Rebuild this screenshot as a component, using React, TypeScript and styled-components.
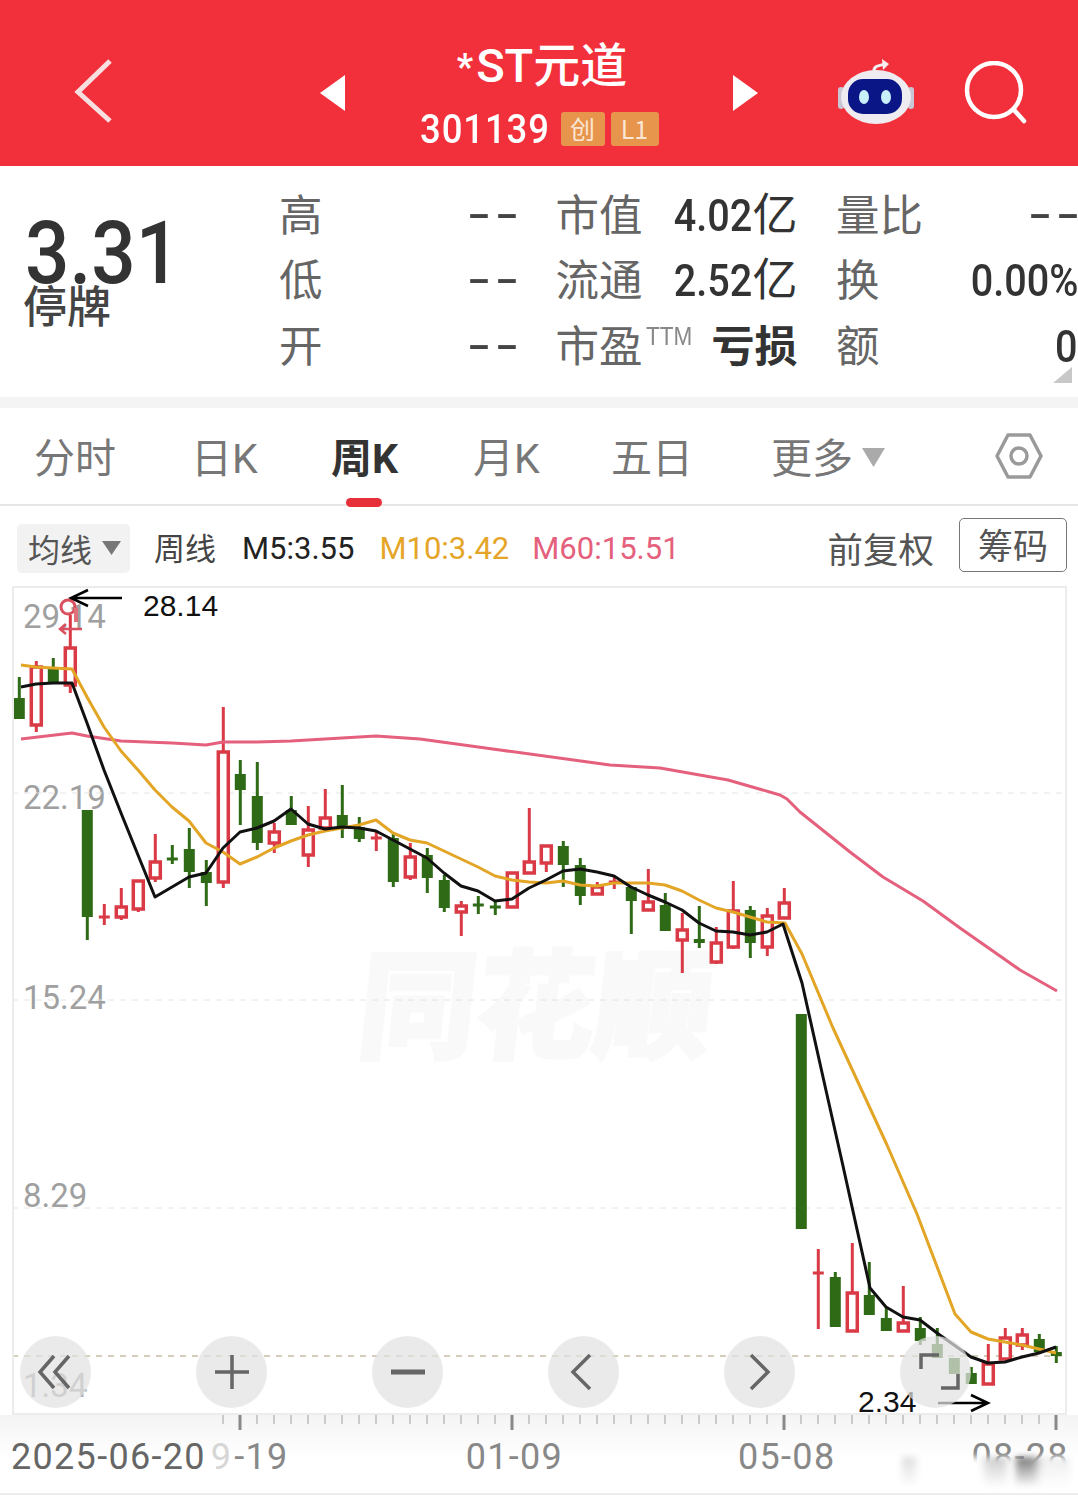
import React from "react";
import styled, { createGlobalStyle } from "styled-components";

const CJK = `"Noto Sans CJK SC", "Noto Sans", sans-serif`;
const ROBOTO = `"Roboto", ${CJK}`;

const Global = createGlobalStyle`
  html, body { margin: 0; padding: 0; background: #fff; }
  body { width: 1078px; height: 1500px; overflow: hidden; font-family: ${CJK}; }
  * { box-sizing: border-box; }
`;

const Page = styled.div`
  position: relative;
  width: 1078px;
  height: 1500px;
  display: flex;
  flex-direction: column;
  background: #fff;
  overflow: hidden;
`;

/* ---------- header ---------- */
const Header = styled.header`
  height: 166px;
  flex: none;
  background: #f2303b;
  display: flex;
  align-items: center;
  padding: 20px 0 0 72px;
  color: #fff;
`;
const IconSlot = styled.div<{ $w: number; $ml: number; $mt?: number }>`
  width: ${(p) => p.$w}px;
  margin-left: ${(p) => p.$ml}px;
  margin-top: ${(p) => p.$mt ?? 0}px;
  flex: none;
  display: flex;
  justify-content: center;
`;
const TitleBlock = styled.div`
  width: 382px;
  flex: none;
  display: flex;
  flex-direction: column;
  align-items: center;
  margin-top: -3px;
`;
const Title = styled.div`
  font-family: ${ROBOTO};
  font-size: 47px;
  line-height: 56px;
  font-weight: 500;
  white-space: nowrap;
  display: flex;
  align-items: center;
  margin-left: 6px;
`;
const TitleStar = styled.span`
  font-size: 36px;
  margin-right: 3px;
  margin-top: 2px;
  font-weight: 700;
`;
const CodeRow = styled.div`
  display: flex;
  align-items: center;
  gap: 6px;
  margin-top: 16px;
`;
const Code = styled.span`
  display: inline-block;
  font-family: ${ROBOTO};
  font-size: 41px;
  line-height: 36px;
  font-weight: 500;
  margin-right: 6px;
  width: 129px;
  letter-spacing: 1px;
  white-space: nowrap;
  transform: scaleX(0.89);
  transform-origin: left center;
`;
const Badge = styled.span<{ $w: number }>`
  width: ${(p) => p.$w}px;
  height: 34px;
  background: #e7944d;
  color: #fbe6d4;
  border-radius: 3px;
  font-size: 25px;
  line-height: 32px;
  text-align: center;
`;

/* ---------- quote ---------- */
const Quote = styled.section`
  position: relative;
  height: 231px;
  flex: none;
  display: flex;
  padding-top: 17px;
`;
const PriceColumn = styled.div`
  width: 279px;
  flex: none;
  padding: 37px 0 0 23px;
`;
const Price = styled.div`
  font-family: ${ROBOTO};
  font-size: 88px;
  line-height: 66px;
  font-weight: 500;
  color: #333;
  margin-left: 2px;
  white-space: nowrap;
  transform: scaleX(0.89);
  transform-origin: left center;
`;
const Halt = styled.div`
  font-size: 44px;
  line-height: 46px;
  font-weight: 500;
  color: #444;
  margin-top: -5px;
`;
const StatGrid = styled.div`
  display: grid;
  grid-template-columns: 238px 242px 242px;
  grid-auto-rows: 65.5px;
  column-gap: 38.5px;
  height: 197px;
`;
const StatCell = styled.div`
  display: flex;
  justify-content: space-between;
  align-items: center;
  white-space: nowrap;
`;
const StatLabel = styled.span`
  font-size: 43.5px;
  line-height: 50px;
  color: #666;
  display: flex;
  align-items: flex-start;
  margin-top: -6px;
`;
const Ttm = styled.span`
  font-family: "Liberation Sans", sans-serif;
  font-size: 25px;
  line-height: 34px;
  margin-left: 3px;
  color: #888;
  transform: scaleX(0.9);
  transform-origin: left center;
`;
const StatValue = styled.span<{ $cjk?: boolean }>`
  font-family: ${ROBOTO};
  font-size: ${(p) => (p.$cjk ? 43 : 45)}px;
  font-weight: ${(p) => (p.$cjk ? 700 : 400)};
  line-height: 50px;
  color: #333;
  display: flex;
`;
const Num = styled.span`
  display: inline-block;
  font-weight: 500;
  margin-left: -10px;
  transform: scaleX(0.88);
  transform-origin: right center;
`;
const Dash = styled.span`
  font-family: "Liberation Sans", sans-serif;
  font-size: 72px;
  line-height: 50px;
  letter-spacing: 4px;
  margin-right: -6px;
  margin-top: -10px;
  color: #444;
  transform: scaleY(0.7);
`;
const CornerMark = styled.div`
  position: absolute;
  right: 6px;
  bottom: 14px;
  width: 19px;
  height: 16px;
  background: #c8c8c8;
  clip-path: polygon(100% 0, 100% 100%, 0 100%);
`;
const Band = styled.div`
  height: 11px;
  flex: none;
  background: #f4f4f4;
`;

/* ---------- tabs ---------- */
const Tabs = styled.nav`
  position: relative;
  height: 98px;
  flex: none;
  border-bottom: 2px solid #e6e6e6;
  display: flex;
  align-items: center;
  padding: 0 34px 0 34px;
`;
const Tab = styled.div<{ $active?: boolean; $w: number }>`
  position: relative;
  width: ${(p) => p.$w}px;
  flex: none;
  font-size: 41px;
  line-height: 104px;
  height: 98px;
  white-space: nowrap;
  color: ${(p) => (p.$active ? "#333" : "#777")};
  font-weight: ${(p) => (p.$active ? 700 : 400)};
  font-family: ${ROBOTO};
`;
const TabMark = styled.span`
  position: absolute;
  left: 15px;
  bottom: -2px;
  width: 36px;
  height: 9px;
  border-radius: 5px;
  background: #e8303a;
`;
const MoreCaret = styled.span`
  display: inline-block;
  width: 23px;
  height: 19px;
  margin-left: 9px;
  background: #aaa;
  clip-path: polygon(0 0, 100% 0, 50% 100%);
  transform: translateY(-6px);
`;
const SettingsSlot = styled.div`
  margin-left: auto;
  display: flex;
`;

/* ---------- toolbar ---------- */
const Toolbar = styled.div`
  height: 80px;
  flex: none;
  display: flex;
  align-items: center;
  padding: 0 11px 0 17px;
  white-space: nowrap;
`;
const MaChip = styled.div`
  width: 113px;
  height: 49px;
  margin-top: 4px;
  background: #f2f2f2;
  border-radius: 5px;
  display: flex;
  align-items: center;
  padding-left: 11px;
  font-size: 32px;
  color: #555;
`;
const ChipCaret = styled.span`
  width: 19px;
  height: 14px;
  margin-left: 10px;
  background: #777;
  clip-path: polygon(0 0, 100% 0, 50% 100%);
`;
const ToolText = styled.span<{ $color: string; $ml: number; $mt?: number }>`
  font-family: ${ROBOTO};
  font-size: 31px;
  margin-left: ${(p) => p.$ml}px;
  margin-top: ${(p) => p.$mt ?? 4}px;
  color: ${(p) => p.$color};
`;
const AdjustLabel = styled.span`
  margin-left: auto;
  font-size: 35.5px;
  margin-top: 2px;
  color: #555;
`;
const ChipButton = styled.div`
  width: 108px;
  height: 54px;
  margin-left: 25px;
  margin-top: -3px;
  border: 1px solid #777;
  border-radius: 5px;
  font-size: 35px;
  line-height: 50px;
  text-align: center;
  color: #555;
`;

/* ---------- chart ---------- */
const ChartFrame = styled.div`
  position: relative;
  flex: none;
  width: 1055px;
  height: 829px;
  margin-left: 12px;
  border: 2px solid #ececec;
  overflow: hidden;
`;
const ChartSvg = styled.svg`
  position: relative;
  z-index: 1;
  display: block;
`;
const Watermark = styled.div`
  position: absolute;
  left: 346px;
  top: 345px;
  font-size: 118px;
  line-height: 130px;
  font-weight: 900;
  color: #f9f9f9;
  -webkit-text-stroke: 3px #f9f9f9;
  white-space: nowrap;
  transform: skewX(-6deg);
`;
const PriceLabel = styled.span<{ $top: number }>`
  position: absolute;
  left: 9px;
  top: ${(p) => p.$top}px;
  font-family: ${ROBOTO};
  font-size: 33px;
  line-height: 40px;
  color: #a0a0a0;
`;
const Extreme = styled.span<{ $left: number; $top: number }>`
  position: absolute;
  z-index: 2;
  left: ${(p) => p.$left}px;
  top: ${(p) => p.$top}px;
  font-family: "Liberation Sans", sans-serif;
  font-size: 30px;
  line-height: 34px;
  color: #111;
`;
const FloatingControls = styled.div`
  position: absolute;
  z-index: 3;
  left: 6px;
  top: 748px;
  display: flex;
  gap: 105px;
`;
const RoundButton = styled.div`
  width: 71px;
  height: 72px;
  border-radius: 50%;
  background: rgba(226, 226, 226, 0.72);
  display: flex;
  align-items: center;
  justify-content: center;
`;

/* ---------- axis ---------- */
const Axis = styled.div`
  position: relative;
  flex: none;
  height: 80px;
  border-bottom: 2px solid #ececec;
  background: linear-gradient(180deg, #f4f4f4 0, #fff 55%);
`;
const TickSvg = styled.svg`
  display: block;
`;
const AxisLabels = styled.div`
  height: 50px;
  font-family: ${ROBOTO};
  font-size: 36px;
  line-height: 50px;
  letter-spacing: 1.3px;
  display: flex;
  padding-left: 11px;
  white-space: nowrap;
`;
const AxisLabel = styled.span<{ $ml: number; $dark?: boolean }>`
  margin-left: ${(p) => p.$ml}px;
  color: ${(p) => (p.$dark ? "#666" : "#888")};
`;
const FadedDigit = styled.span`
  color: #d6d6d6;
  margin-left: 5px;
`;
const CornerSmudge = styled.div`
  position: absolute;
  z-index: 4;
  left: 895px;
  top: 1457px;
  width: 175px;
  height: 32px;
  filter: blur(3px);
  background:
    linear-gradient(180deg, rgba(255, 255, 255, 0) 0, #fff 95%),
    linear-gradient(
      90deg,
      #fff 0 3%,
      #ddd 5% 10%,
      #fff 14% 48%,
      #ccc 54% 62%,
      #fff 66% 68%,
      #777 70% 78%,
      #eee 84% 100%
    );
`;

/* ---------- data ---------- */
type C = [boolean, number, number, number, number];
const R = true;
const G = false;
const candles: C[] = [
  [G, 677, 698, 719, 719], [R, 661, 667, 725, 732], [G, 658, 668, 683, 683], [R, 615, 648, 685, 693],
  [G, 810, 810, 917, 940], [R, 904, 917, 917, 925], [R, 888, 907, 917, 920], [R, 881, 881, 909, 912],
  [R, 834, 862, 878, 882], [G, 845, 859, 859, 864], [G, 828, 849, 872, 888], [G, 860, 872, 883, 906],
  [R, 707, 752, 882, 888], [G, 760, 774, 790, 825], [G, 762, 796, 843, 850], [R, 823, 832, 843, 853],
  [G, 796, 810, 825, 825], [R, 806, 830, 855, 867], [R, 789, 818, 828, 828], [G, 785, 815, 826, 838],
  [G, 817, 827, 839, 842], [R, 832, 838, 838, 851], [G, 833, 838, 882, 887], [R, 843, 857, 877, 880],
  [G, 848, 855, 878, 893], [G, 875, 880, 908, 912], [R, 901, 906, 912, 936], [G, 896, 905, 905, 914],
  [G, 901, 907, 907, 915], [R, 873, 873, 907, 908], [R, 808, 862, 873, 873], [R, 846, 846, 863, 872],
  [G, 841, 846, 865, 887], [G, 858, 865, 896, 905], [R, 882, 887, 894, 894], [R, 877, 882, 882, 889],
  [G, 887, 887, 901, 934], [R, 869, 902, 910, 910], [G, 893, 905, 931, 931], [R, 913, 930, 940, 973],
  [G, 906, 939, 943, 948], [R, 927, 943, 962, 964], [R, 881, 911, 947, 949], [G, 906, 910, 943, 958],
  [R, 908, 916, 947, 956], [R, 888, 903, 918, 918], [G, 1014, 1014, 1229, 1229], [R, 1249, 1273, 1273, 1329],
  [G, 1272, 1277, 1327, 1327], [R, 1243, 1293, 1331, 1331], [G, 1262, 1295, 1315, 1315], [G, 1307, 1318, 1331, 1331],
  [R, 1286, 1323, 1331, 1331], [G, 1317, 1328, 1341, 1345], [G, 1328, 1344, 1358, 1358], [G, 1358, 1358, 1374, 1374],
  [G, 1367, 1373, 1384, 1384], [R, 1344, 1364, 1384, 1384], [R, 1328, 1338, 1359, 1359], [R, 1328, 1335, 1345, 1350],
  [G, 1334, 1339, 1352, 1352], [G, 1346, 1352, 1356, 1363],
];

const m5 = "21,687 36,684 53,683 72,683 87,723 104,770 121,813 155,897 172,887 189,877 206,873 223,848 240,832 257,828 274,821 291,809 308,824 325,829 342,827 359,828 376,831 393,840 410,849 427,858 444,873 461,886 478,891 495,901 512,899 529,888 546,880 563,871 580,869 597,872 614,876 631,887 648,895 665,902 682,910 699,923 716,931 733,932 750,935 767,932 783,924 802,983 823,1077 843,1166 870,1288 886,1307 903,1317 920,1320 937,1333 954,1345 971,1357 988,1363 1005,1362 1022,1357 1039,1353 1056,1347";
const m10 = "21,665 36,667 53,668 72,669 87,697 104,727 121,751 138,770 155,790 172,807 189,821 206,843 223,852 240,864 257,857 274,848 291,841 308,835 325,831 342,828 359,825 376,820 393,833 410,840 427,843 444,851 461,859 478,867 495,876 512,880 529,882 546,883 563,881 580,885 597,886 614,883 631,883 648,883 665,885 682,891 699,900 716,908 733,912 750,917 767,922 785,923 802,954 833,1028 887,1145 917,1214 955,1314 971,1332 988,1339 1005,1342 1022,1345 1039,1349 1056,1353";
const m60 = "21,739 72,733 87,736 121,741 172,743 206,745 223,742 257,742 291,741 342,738 376,736 420,739 500,750 610,765 660,768 728,780 780,795 787,799 800,812 850,852 883,877 923,901 960,928 1020,970 1057,991";

const RED = "#d93a45";
const GREEN = "#2f6a16";

const Candle = ({ c, i }: { c: C; i: number }) => {
  const x = 19.3 + i * 17;
  const [up, wt, bt, bb, wb] = c;
  const col = up ? RED : GREEN;
  return (
    <g>
      <line x1={x} x2={x} y1={wt} y2={bt} stroke={col} strokeWidth={3} />
      <line x1={x} x2={x} y1={bb} y2={wb} stroke={col} strokeWidth={3} />
      {bt === bb ? (
        <line x1={x - 5.5} x2={x + 5.5} y1={bt} y2={bt} stroke={col} strokeWidth={3} />
      ) : up ? (
        <rect x={x - 5} y={bt} width={10} height={bb - bt} fill="#fff" stroke={col} strokeWidth={3.5} />
      ) : (
        <rect x={x - 5.5} y={bt} width={11} height={bb - bt} fill={col} />
      )}
    </g>
  );
};

const Chart = () => (
  <ChartSvg width={1051} height={825} viewBox="14 588 1051 825">
    {[793, 1000, 1208].map((y) => (
      <line key={y} x1={12} x2={1066} y1={y} y2={y} stroke="#e4e4e4" strokeWidth={1} strokeDasharray="6 6" />
    ))}
    <line x1={12} x2={1066} y1={1356} y2={1356} stroke="#c6bda6" strokeWidth={1.5} strokeDasharray="6 6" />
    {candles.map((c, i) => (
      <Candle key={i} c={c} i={i} />
    ))}
    <circle cx={68} cy={607} r={7} fill="none" stroke="#d9505f" strokeWidth={3} />
    <rect x={74} y={608} width={4} height={14} fill="#e0707c" />
    <path d="M82 629H60M66 624l-6 5 6 5" fill="none" stroke="#d9505f" strokeWidth={2.5} />
    <polyline points={m60} fill="none" stroke="#e5607c" strokeWidth={3} strokeLinejoin="round" />
    <polyline points={m10} fill="none" stroke="#e3a526" strokeWidth={3} strokeLinejoin="round" />
    <polyline points={m5} fill="none" stroke="#111" strokeWidth={3} strokeLinejoin="round" />
    <path d="M122 598H71M88 590l-17 8 17 8" fill="none" stroke="#000" strokeWidth={2.5} />
    <path d="M938 1403H988M971 1395l17 8-17 8" fill="none" stroke="#000" strokeWidth={2.5} />
  </ChartSvg>
);

const Glyph = ({ children, size = 40 }: { children: React.ReactNode; size?: number }) => (
  <svg width={size} height={size} viewBox={`0 0 ${size} ${size}`} fill="none" stroke="#666" strokeWidth={3.5} overflow="visible">
    {children}
  </svg>
);

const Robot = () => (
  <svg width={76} height={66} viewBox="0 0 76 66">
    <path d="M36 13C35 6 42 7 47 5" fill="none" stroke="#f3f1f4" strokeWidth={3} />
    <path d="M44 0l7 5-6 6z" fill="#f7eef0" />
    <rect x={0} y={28} width={6} height={22} rx={3} fill="#c9c6d6" />
    <rect x={70} y={28} width={6} height={22} rx={3} fill="#c9c6d6" />
    <ellipse cx={38} cy={38} rx={35} ry={27} fill="#efecf1" />
    <rect x={10} y={20} width={54} height={35} rx={15} fill="#0a1685" />
    <ellipse cx={26} cy={38} rx={5} ry={7} fill="#c9f0fa" />
    <ellipse cx={48} cy={38} rx={5} ry={7} fill="#c9f0fa" />
  </svg>
);

const App = () => {
  const minor: number[] = [];
  for (let i = 0; i < 50; i++) minor.push(223 + i * 17);
  return (
    <Page>
      <Global />
      <Header>
        <IconSlot $w={44} $ml={0} $mt={-4}>
          <svg width={44} height={66} viewBox="0 0 44 66" fill="none" stroke="#f7dfe0" strokeWidth={5}>
            <path d="M38 3L6 34L38 63" />
          </svg>
        </IconSlot>
        <IconSlot $w={30} $ml={202}>
          <svg width={26} height={36} viewBox="0 0 26 36"><path d="M25 0V36L0 18Z" fill="#fff" /></svg>
        </IconSlot>
        <TitleBlock>
          <Title><TitleStar>*</TitleStar>ST元道</Title>
          <CodeRow>
            <Code>301139</Code>
            <Badge $w={44}>创</Badge>
            <Badge $w={48}>L1</Badge>
          </CodeRow>
        </TitleBlock>
        <IconSlot $w={30} $ml={0}>
          <svg width={26} height={36} viewBox="0 0 26 36"><path d="M1 0V36L26 18Z" fill="#fff" /></svg>
        </IconSlot>
        <IconSlot $w={76} $ml={78} $mt={-2}>
          <Robot />
        </IconSlot>
        <IconSlot $w={64} $ml={50}>
          <svg width={64} height={64} viewBox="0 0 64 64" fill="none" stroke="#fff" strokeWidth={4.5}>
            <circle cx={30} cy={29} r={27} />
            <path d="M50 49L60 60" strokeLinecap="round" />
          </svg>
        </IconSlot>
      </Header>

      <Quote>
        <PriceColumn>
          <Price>3.31</Price>
          <Halt>停牌</Halt>
        </PriceColumn>
        <StatGrid>
          <StatCell><StatLabel>高</StatLabel><Dash>--</Dash></StatCell>
          <StatCell><StatLabel>市值</StatLabel><StatValue><Num>4.02</Num>亿</StatValue></StatCell>
          <StatCell><StatLabel>量比</StatLabel><Dash>--</Dash></StatCell>
          <StatCell><StatLabel>低</StatLabel><Dash>--</Dash></StatCell>
          <StatCell><StatLabel>流通</StatLabel><StatValue><Num>2.52</Num>亿</StatValue></StatCell>
          <StatCell><StatLabel>换</StatLabel><StatValue><Num>0.00%</Num></StatValue></StatCell>
          <StatCell><StatLabel>开</StatLabel><Dash>--</Dash></StatCell>
          <StatCell><StatLabel>市盈<Ttm>TTM</Ttm></StatLabel><StatValue $cjk>亏损</StatValue></StatCell>
          <StatCell><StatLabel>额</StatLabel><StatValue><Num>0</Num></StatValue></StatCell>
        </StatGrid>
        <CornerMark />
      </Quote>
      <Band />

      <Tabs>
        <Tab $w={157}>分时</Tab>
        <Tab $w={140}>日K</Tab>
        <Tab $w={142} $active>周K<TabMark /></Tab>
        <Tab $w={138}>月K</Tab>
        <Tab $w={160}>五日</Tab>
        <Tab $w={130}>更多<MoreCaret /></Tab>
        <SettingsSlot>
          <svg width={50} height={50} viewBox="0 0 50 50" fill="none" stroke="#9a9a9a" strokeWidth={3.5}>
            <path d="M14 4H36L47 25L36 46H14L3 25Z" strokeLinejoin="round" />
            <circle cx={25} cy={25} r={8} />
          </svg>
        </SettingsSlot>
      </Tabs>

      <Toolbar>
        <MaChip>均线<ChipCaret /></MaChip>
        <ToolText $color="#444" $ml={24} $mt={0}>周线</ToolText>
        <ToolText $color="#222" $ml={26}>M5:3.55</ToolText>
        <ToolText $color="#e5a528" $ml={25}>M10:3.42</ToolText>
        <ToolText $color="#e5607c" $ml={23}>M60:15.51</ToolText>
        <AdjustLabel>前复权</AdjustLabel>
        <ChipButton>筹码</ChipButton>
      </Toolbar>

      <ChartFrame>
        <Watermark>同花顺</Watermark>
        <PriceLabel $top={9}>29.14</PriceLabel>
        <PriceLabel $top={190}>22.19</PriceLabel>
        <PriceLabel $top={390}>15.24</PriceLabel>
        <PriceLabel $top={588}>8.29</PriceLabel>
        <PriceLabel $top={778}>1.34</PriceLabel>
        <Chart />
        <Extreme $left={129} $top={1}>28.14</Extreme>
        <Extreme $left={844} $top={797}>2.34</Extreme>
        <FloatingControls>
          <RoundButton>
            <Glyph><path d="M18 4L4 20L18 36M33 4L19 20L33 36" /></Glyph>
          </RoundButton>
          <RoundButton>
            <Glyph><path d="M20 3V37M3 20H37" /></Glyph>
          </RoundButton>
          <RoundButton>
            <Glyph><path d="M3 20H37" strokeWidth={5} /></Glyph>
          </RoundButton>
          <RoundButton>
            <Glyph><path d="M26 3L9 20L26 37" /></Glyph>
          </RoundButton>
          <RoundButton>
            <Glyph><path d="M11 3L28 20L11 37" /></Glyph>
          </RoundButton>
          <RoundButton>
            <Glyph size={44}><path d="M7 19V5H25M27 38H44V24" /></Glyph>
          </RoundButton>
        </FloatingControls>
      </ChartFrame>

      <Axis>
        <TickSvg width={1078} height={17} viewBox="0 0 1078 17">
          {minor.map((x) => {
            const major = (x - 240) % 272 === 0 && x >= 240;
            return (
              <line
                key={x}
                x1={x}
                x2={x}
                y1={0}
                y2={major ? 15 : 9}
                stroke={major ? "#888" : "#bbb"}
                strokeWidth={major ? 3 : 1.5}
              />
            );
          })}
        </TickSvg>
        <AxisLabels>
          <AxisLabel $ml={0} $dark>2025-06-20<FadedDigit>9</FadedDigit></AxisLabel>
          <AxisLabel $ml={2}>-19</AxisLabel>
          <AxisLabel $ml={177}>01-09</AxisLabel>
          <AxisLabel $ml={175}>05-08</AxisLabel>
          <AxisLabel $ml={136}>08-28</AxisLabel>
        </AxisLabels>
      </Axis>
      <CornerSmudge />
    </Page>
  );
};

export default App;
